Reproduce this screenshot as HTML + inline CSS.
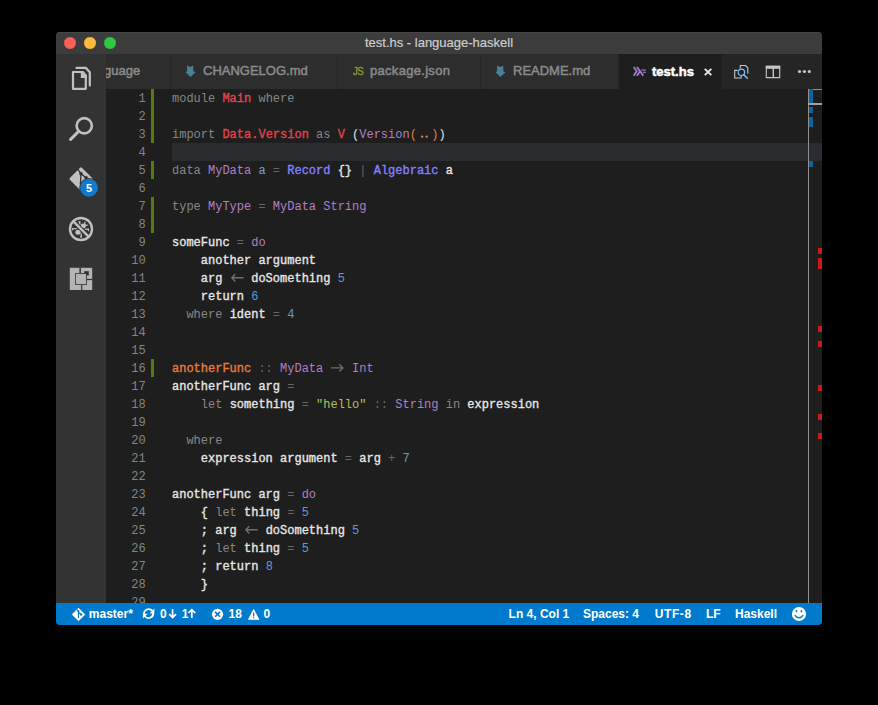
<!DOCTYPE html>
<html><head><meta charset="utf-8">
<style>
*{margin:0;padding:0;box-sizing:border-box}
html,body{width:878px;height:705px;background:#000;overflow:hidden}
body{position:relative;font-family:"Liberation Sans",sans-serif}
.win{position:absolute;left:56px;top:32px;width:766px;height:593px;border-radius:4px;overflow:hidden;background:#1e1e1e}
.title{position:absolute;left:0;top:0;width:766px;height:22px;background:#3c3c3c;box-shadow:inset 0 1px 0 #464646}
.tl{position:absolute;top:5px;width:12px;height:12px;border-radius:50%}
.ttext{position:absolute;left:0;width:766px;top:3px;text-align:center;font-size:13px;color:#cccccc;line-height:16px;-webkit-text-stroke:0.2px currentColor}
.act{position:absolute;left:0;top:22px;width:50px;height:549px;background:#333333}
.tabs{position:absolute;left:50px;top:22px;width:716px;height:35px;background:#252526}
.tab{position:absolute;top:0;height:35px;background:#2d2d2d;border-right:1px solid #252526;font-size:13px;color:#8a8a8a;-webkit-text-stroke:0.5px currentColor;line-height:33px;white-space:nowrap;overflow:hidden}
.editor{position:absolute;left:50px;top:57px;width:716px;height:514px;background:#1e1e1e;overflow:hidden}
.status{position:absolute;left:0;top:571px;width:766px;height:22px;background:#007acc;color:#fff;font-size:12px;font-weight:bold;line-height:22px}
.status span{position:absolute;top:0;white-space:nowrap}
.code{position:absolute;left:66px;top:1px;font-family:"Liberation Mono",monospace;font-size:12px;line-height:18px;white-space:pre;color:#d4d4d4}
.ln{position:absolute;left:0;top:1px;width:39.6px;text-align:right;font-family:"Liberation Mono",monospace;font-size:12px;line-height:18px;color:#858585}
.gb{position:absolute;left:45px;width:3px;background:#587c0c}
.b{font-weight:normal;-webkit-text-stroke:0.35px currentColor}
.kw{color:#878787}
.rd{color:#e0454c}
.pu{color:#b080c4}
.or{color:#e87d3e}
.bl{color:#8282ff}
.tv{color:#74a6d8}
.op{color:#666666}
.wh{color:#e6e6e6}
.nu{color:#5f9ad8}
.st{color:#b5c060}
.arr{display:inline-block;width:14.4px;height:0;position:relative}
.arr svg{position:absolute;left:0;top:-13px}
</style></head><body>
<div class="win">
  <div class="title">
    <div class="tl" style="left:8px;background:#fc605c;box-shadow:inset 0 0 0 0.5px #de4a45"></div>
    <div class="tl" style="left:28px;background:#fdbc40;box-shadow:inset 0 0 0 0.5px #dc9e2a"></div>
    <div class="tl" style="left:48px;background:#30c744;box-shadow:inset 0 0 0 0.5px #24a834"></div>
    <div class="ttext">test.hs - language-haskell</div>
  </div>
  <div class="act"></div>
  <div class="tabs">
    <div class="tab" style="left:0;width:65px"><span style="position:absolute;left:-2px">guage</span></div>
    <div class="tab" style="left:65px;width:167px"><span style="position:absolute;left:32px">CHANGELOG.md</span></div>
    <div class="tab" style="left:232px;width:143px"><span style="position:absolute;left:32px;letter-spacing:0.3px">package.json</span></div>
    <div class="tab" style="left:375px;width:138px"><span style="position:absolute;left:32px">README.md</span></div>
    <div class="tab" style="left:513px;width:104px;background:#1e1e1e;color:#fff;font-weight:bold"><span style="position:absolute;left:33px;top:1px">test.hs</span></div>
  </div>
  <div class="editor">
    <div style="position:absolute;left:66px;top:54px;width:650px;height:18px;background:#2b2c2f"></div><div class="gb" style="top:0px;height:54px"></div><div class="gb" style="top:72px;height:18px"></div><div class="gb" style="top:108px;height:36px"></div><div class="gb" style="top:270px;height:18px"></div><div class="code"><span class="kw">module</span> <span class="rd b">Main</span> <span class="kw">where</span>
 
<span class="kw">import</span> <span class="rd b">Data.Version</span> <span class="kw">as</span> <span class="rd b">V</span> <span class="wh">(</span><span class="pu">Version</span><span class="or">(</span><span class="arr"><svg width="15" height="18"><circle cx="5.1" cy="11.6" r="1.2" fill="#e87d3e"/><circle cx="9.7" cy="11.6" r="1.2" fill="#e87d3e"/></svg></span><span class="or">)</span><span class="wh">)</span>
 
<span class="kw">data</span> <span class="pu">MyData</span> <span class="tv">a</span> <span class="op">=</span> <span class="bl b">Record</span> <span class="wh b">{}</span> <span class="op">|</span> <span class="bl b">Algebraic</span> <span class="wh b">a</span>
 
<span class="kw">type</span> <span class="pu">MyType</span> <span class="op">=</span> <span class="pu">MyData</span> <span class="pu">String</span>
 
<span class="wh b">someFunc</span> <span class="op">=</span> <span class="pu">do</span>
    <span class="wh b">another argument</span>
    <span class="wh b">arg</span> <span class="arr op"><svg width="15" height="18"><path d="M1.8 8.8H13.6M5.3 5.2L1.8 8.8L5.3 12.4" stroke="#6e6e6e" stroke-width="1.4" fill="none"/></svg></span> <span class="wh b">doSomething</span> <span class="nu">5</span>
    <span class="wh b">return</span> <span class="nu">6</span>
  <span class="kw">where</span> <span class="wh b">ident</span> <span class="op">=</span> <span class="nu">4</span>
 
 
<span class="or b">anotherFunc</span> <span class="op">::</span> <span class="pu">MyData</span> <span class="arr op"><svg width="15" height="18"><path d="M0.9 8.9H12.8M9.3 5.3L12.8 8.9L9.3 12.5" stroke="#6e6e6e" stroke-width="1.4" fill="none"/></svg></span> <span class="pu">Int</span>
<span class="wh b">anotherFunc arg</span> <span class="op">=</span>
    <span class="kw">let</span> <span class="wh b">something</span> <span class="op">=</span> <span class="st">"hello"</span> <span class="op">::</span> <span class="pu">String</span> <span class="kw">in</span> <span class="wh b">expression</span>
 
  <span class="kw">where</span>
    <span class="wh b">expression argument</span> <span class="op">=</span> <span class="wh b">arg</span> <span class="op">+</span> <span class="nu">7</span>
 
<span class="wh b">anotherFunc arg</span> <span class="op">=</span> <span class="pu">do</span>
    <span class="wh b">{</span> <span class="kw">let</span> <span class="wh b">thing</span> <span class="op">=</span> <span class="nu">5</span>
    <span class="wh b">;</span> <span class="wh b">arg</span> <span class="arr op"><svg width="15" height="18"><path d="M1.8 8.8H13.6M5.3 5.2L1.8 8.8L5.3 12.4" stroke="#6e6e6e" stroke-width="1.4" fill="none"/></svg></span> <span class="wh b">doSomething</span> <span class="nu">5</span>
    <span class="wh b">;</span> <span class="kw">let</span> <span class="wh b">thing</span> <span class="op">=</span> <span class="nu">5</span>
    <span class="wh b">;</span> <span class="wh b">return</span> <span class="nu">8</span>
    <span class="wh b">}</span>
 </div>
    <div style="position:absolute;left:702px;top:0;width:1px;height:514px;background:#8f8f8f"></div><div style="position:absolute;left:702px;top:0;width:14px;height:1px;background:#8f8f8f"></div><div style="position:absolute;left:703px;top:0px;width:4px;height:14px;background:#0e639c"></div><div style="position:absolute;left:703px;top:18px;width:4px;height:6px;background:#0e639c"></div><div style="position:absolute;left:703px;top:28px;width:4px;height:10px;background:#0e639c"></div><div style="position:absolute;left:703px;top:72px;width:4px;height:6px;background:#0e639c"></div><div style="position:absolute;left:702px;top:14px;width:14px;height:2px;background:#a0a0a0"></div><div style="position:absolute;left:712px;top:159px;width:4px;height:6px;background:#c81a1a"></div><div style="position:absolute;left:712px;top:169px;width:4px;height:11px;background:#c81a1a"></div><div style="position:absolute;left:712px;top:237px;width:4px;height:6px;background:#c81a1a"></div><div style="position:absolute;left:712px;top:252px;width:4px;height:6px;background:#c81a1a"></div><div style="position:absolute;left:712px;top:296px;width:4px;height:6px;background:#c81a1a"></div><div style="position:absolute;left:712px;top:325px;width:4px;height:6px;background:#c81a1a"></div><div style="position:absolute;left:712px;top:344px;width:4px;height:6px;background:#c81a1a"></div>
    <div class="ln">1<br>2<br>3<br>4<br>5<br>6<br>7<br>8<br>9<br>10<br>11<br>12<br>13<br>14<br>15<br>16<br>17<br>18<br>19<br>20<br>21<br>22<br>23<br>24<br>25<br>26<br>27<br>28<br>29</div>
  </div>
  <div class="status">
    <span style="left:32.8px">master*</span>
    <span style="left:104px">0</span>
    <span style="left:125.7px">1</span>
    <span style="left:172.5px">18</span>
    <span style="left:207.6px">0</span>
    <span style="left:452.6px">Ln 4, Col 1</span>
    <span style="left:527px">Spaces: 4</span>
    <span style="left:598.7px;letter-spacing:0.6px">UTF-8</span>
    <span style="left:650px">LF</span>
    <span style="left:679px">Haskell</span>
  </div>
</div>

<svg style="position:absolute;left:66px;top:62px" width="30" height="32" viewBox="0 0 30 32">
  <path d="M10.5 5.9H19.8L23.8 10.3V23.4" stroke="#c0c0c0" stroke-width="2.2" fill="none" stroke-linecap="round" stroke-linejoin="miter"/>
  <path d="M7 10H16.8L19.8 13.8V26.8H7Z" stroke="#c0c0c0" stroke-width="2.2" fill="none" stroke-linejoin="round"/>
  <path d="M14.8 9.2H17.2L20.9 13.6V16.1H14.8Z" fill="#c0c0c0"/>
</svg>
<svg style="position:absolute;left:64px;top:112px" width="34" height="34" viewBox="0 0 34 34">
  <circle cx="20.25" cy="13.75" r="7.6" stroke="#c0c0c0" stroke-width="2.6" fill="none"/>
  <path d="M14.6 19.4L6.6 27.4" stroke="#c0c0c0" stroke-width="3" stroke-linecap="round"/>
</svg>
<svg style="position:absolute;left:64px;top:160px" width="38" height="38" viewBox="0 0 38 38">
  <rect x="8.45" y="10.35" width="17.1" height="17.1" rx="1.6" transform="rotate(45 17 18.9)" fill="#c0c0c0"/>
  <path d="M13.8 9.2L17 13.7L16.4 24M17 13.7L22.1 17.8" stroke="#333" stroke-width="1.3" fill="none"/>
  <circle cx="17" cy="13.7" r="1.8" fill="#333"/>
  <circle cx="22.1" cy="17.8" r="1.8" fill="#333"/>
  <circle cx="25.07" cy="27.76" r="9.8" fill="#333"/>
  <circle cx="25.07" cy="27.76" r="8.9" fill="#0e7bd0"/>
  <text x="25.1" y="31.8" text-anchor="middle" font-family="Liberation Sans" font-weight="bold" font-size="11" fill="#fff">5</text>
</svg>
<svg style="position:absolute;left:64px;top:212px" width="34" height="34" viewBox="0 0 34 34">
  <g fill="#c0c0c0">
    <ellipse cx="19.4" cy="13.8" rx="2.6" ry="2.4"/>
    <ellipse cx="14" cy="20.2" rx="2.7" ry="2.5"/>
    <rect x="15.1" y="9.4" width="1.3" height="3.6"/><rect x="14.3" y="9.4" width="2.1" height="1.1"/>
    <rect x="20.2" y="9.8" width="1.2" height="2.6"/>
    <rect x="21.2" y="12.6" width="2.6" height="1.2"/>
    <rect x="8" y="16.1" width="4.8" height="1.2"/><rect x="8" y="16.1" width="1.2" height="2.2"/>
    <rect x="20.6" y="16.6" width="4.4" height="1.2"/><rect x="23.8" y="16.6" width="1.2" height="2.6"/>
    <rect x="16.6" y="21.4" width="1.3" height="4"/><rect x="16" y="24.3" width="1.9" height="1.1"/>
  </g>
  <path d="M9.8 9.8L24.2 24.2" stroke="#333" stroke-width="4.4"/>
  <circle cx="17" cy="17" r="11" stroke="#c0c0c0" stroke-width="2.4" fill="none"/>
  <path d="M9.4 9.4L24.6 24.6" stroke="#c0c0c0" stroke-width="2.4"/>
</svg>
<svg style="position:absolute;left:64px;top:262px" width="34" height="34" viewBox="0 0 34 34">
  <path d="M5.8 5.8H28.2V28H5.8Z" fill="#b4b4b4"/>
  <rect x="15.4" y="5.8" width="1.5" height="5.4" fill="#333"/>
  <rect x="20.25" y="9.2" width="4.55" height="4.3" fill="#333"/>
  <rect x="22.9" y="16.9" width="5.4" height="1.2" fill="#333"/>
  <rect x="17.1" y="22.9" width="1.2" height="5.2" fill="#333"/>
  <rect x="11.1" y="11.1" width="11.8" height="11.8" fill="#333"/>
  <rect x="11.9" y="11.9" width="10.2" height="10.2" fill="#b4b4b4"/>
</svg>

<svg style="position:absolute;left:182px;top:62px" width="18" height="18" viewBox="0 0 18 18"><path d="M5.1 3.6L8.3 5.1L11.2 3.6L11.4 9.2L13.5 10.2L8.4 15.1L3.6 10.2L5.1 9.2Z" fill="#4a7f98"/></svg>
<svg style="position:absolute;left:492px;top:62px" width="18" height="18" viewBox="0 0 18 18"><path d="M5.1 3.6L8.3 5.1L11.2 3.6L11.4 9.2L13.5 10.2L8.4 15.1L3.6 10.2L5.1 9.2Z" fill="#4a7f98"/></svg>
<div style="position:absolute;left:352.5px;top:64.8px;font-size:10.5px;line-height:12px;color:#9a9a34;letter-spacing:-0.6px;transform:scaleX(0.92);transform-origin:left;-webkit-text-stroke:0.3px currentColor">JS</div>
<svg style="position:absolute;left:628px;top:60px" width="24" height="24" viewBox="0 0 24 24">
  <path d="M5.7 7L8.7 11.3L5.7 15.7" stroke="#a577cc" stroke-width="1.9" fill="none"/>
  <path d="M9 7L15.3 15.7M12 11.3L9 15.7" stroke="#a577cc" stroke-width="1.9" fill="none"/>
  <rect x="13.3" y="9.4" width="4.6" height="1.2" fill="#a577cc"/>
  <rect x="15" y="11.7" width="2.9" height="1.2" fill="#a577cc"/>
</svg>
<svg style="position:absolute;left:700px;top:60px" width="60" height="24" viewBox="0 0 60 24">
  <path d="M4.8 8.9L11.3 15.1M11.3 8.9L4.8 15.1" stroke="#e6e6e6" stroke-width="2" />
  <path d="M40.3 8.5V5.5H45.5L47.8 7.8V13.7" stroke="#c5c5c5" stroke-width="1.1" fill="none"/>
  <path d="M37.5 10.4H34.7V18H41.2V16" stroke="#c5c5c5" stroke-width="1.1" fill="none"/>
  <path d="M43.6 14.6L47.3 18.3" stroke="#75beff" stroke-width="1.5" stroke-linecap="round"/>
  <circle cx="41.4" cy="12.3" r="3.2" stroke="#75beff" stroke-width="1.2" fill="none"/>
</svg>
<svg style="position:absolute;left:760px;top:60px" width="60" height="24" viewBox="0 0 60 24">
  <path d="M6.3 6.3H19.7V17.6H6.3Z" stroke="#c5c5c5" stroke-width="1.1" fill="none"/>
  <rect x="5.8" y="5.8" width="14.4" height="3" fill="#c5c5c5"/>
  <rect x="12.6" y="5.8" width="1.4" height="12.3" fill="#c5c5c5"/>
  <circle cx="39.5" cy="11.5" r="1.6" fill="#c5c5c5"/><circle cx="44.4" cy="11.5" r="1.6" fill="#c5c5c5"/><circle cx="49.3" cy="11.5" r="1.6" fill="#c5c5c5"/>
</svg>

<svg style="position:absolute;left:68px;top:604px" width="130" height="20" viewBox="0 0 130 20">
  <path d="M10.5 4L17 10.5L10.5 17L4 10.5Z" fill="#fff" stroke="#fff" stroke-width="0.3" stroke-linejoin="round"/>
  <path d="M9.2 5.6L10.5 7.3V13.9M10.8 8.3L13 10.5" stroke="#007acc" stroke-width="1.15" fill="none"/>
  <circle cx="13.1" cy="10.5" r="1.2" fill="#007acc"/>
  <circle cx="10.5" cy="7.2" r="1" fill="#007acc"/>
  <g transform="translate(72 0)">
    <path d="M3.9 10.2A4.8 4.8 0 0 1 12.4 6.9" stroke="#fff" stroke-width="1.7" fill="none"/>
    <path d="M13.3 9A4.8 4.8 0 0 1 4.8 12.3" stroke="#fff" stroke-width="1.7" fill="none"/>
    <path d="M14.4 4.6V9.4H9.6Z" fill="#fff"/>
    <path d="M2.8 14.6V9.8H7.6Z" fill="#fff"/>
  </g>
  <g stroke="#fff" stroke-width="1.7" fill="none" stroke-linejoin="miter">
    <path d="M104.6 5.2V13.6M101.2 10.2L104.6 13.6L108 10.2"/>
    <path d="M123.8 14V5.6M120.4 9L123.8 5.6L127.2 9"/>
  </g>
</svg>
<svg style="position:absolute;left:206px;top:604px" width="60" height="20" viewBox="0 0 60 20">
  <circle cx="11.55" cy="10.35" r="5.6" fill="#fff"/>
  <path d="M9.1 7.9L14 12.8M14 7.9L9.1 12.8" stroke="#007acc" stroke-width="1.6"/>
  <path d="M47.65 5.2L53 15.55H42.3Z" fill="#fff" stroke="#fff" stroke-width="0.6" stroke-linejoin="round"/>
  <path d="M47.65 8.6V12.4" stroke="#007acc" stroke-width="1.2"/>
  <rect x="47.05" y="13.2" width="1.2" height="1.2" fill="#007acc"/>
</svg>
<svg style="position:absolute;left:786px;top:604px" width="26" height="20" viewBox="0 0 26 20">
  <circle cx="13" cy="10" r="7.1" fill="#fff"/>
  <ellipse cx="10.5" cy="7.2" rx="0.8" ry="1.2" fill="#007acc"/>
  <ellipse cx="15.4" cy="7.2" rx="0.8" ry="1.2" fill="#007acc"/>
  <path d="M8.7 11.3Q13 16.2 17.2 11.3" stroke="#007acc" stroke-width="1.4" fill="none"/>
</svg>
</body></html>
